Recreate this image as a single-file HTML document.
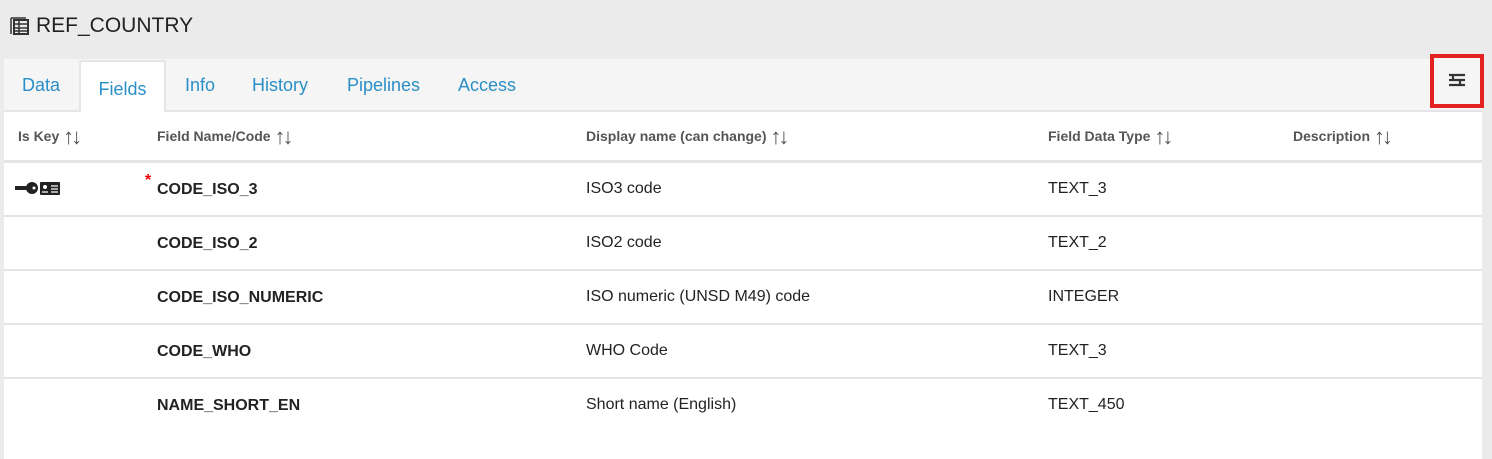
<!DOCTYPE html>
<html><head><meta charset="utf-8"><style>
*{margin:0;padding:0;box-sizing:border-box}
body{width:1492px;height:416px;background:#ebebeb;font-family:"Liberation Sans",sans-serif;overflow:hidden;position:relative}
.title{position:absolute;left:10px;top:14px;font-size:21px;color:#222;display:flex;align-items:center;gap:6px}
.panel{position:absolute;left:4px;top:59px;width:1478px;height:400px;background:#fff}
.tabs{height:53px;background:#f5f5f5;border-bottom:2px solid #e3e5e8;position:relative}
.tab{position:absolute;top:16px;font-size:18px;color:#2a8fc7}
.tab.active{top:1px;left:75px;width:87px;height:52px;background:#fff;border:2px solid #e3e5e8;border-bottom:none;border-radius:3px 3px 0 0;padding-top:17px;text-align:center}
.redbox{position:absolute;left:1430px;top:54px;width:54px;height:54px;border:4px solid #e52222;background:#f5f5f5}
.hdr{position:absolute;top:124px;font-size:14px;font-weight:bold;color:#555}
.hdr span{font-weight:normal;font-size:22px;letter-spacing:-3px;vertical-align:-3px}
.line{position:absolute;left:4px;width:1478px;background:#e3e5e8}
.cell{position:absolute;font-size:16px;color:#222}
.b{font-weight:bold}
</style></head><body>
<div class="title"><svg width="20" height="20" viewBox="0 0 20 20"><rect x="4" y="4" width="14" height="14" fill="none" stroke="#333" stroke-width="2"/><path d="M1 2v16M1 2h15M4 8h14M4 12h14M4 15h14M9 4v14" stroke="#333" stroke-width="1.5" fill="none"/></svg>REF_COUNTRY</div>
<div class="panel"><div class="tabs">
<span class="tab" style="left:18px">Data</span>
<div class="tab active">Fields</div>
<span class="tab" style="left:181px">Info</span>
<span class="tab" style="left:248px">History</span>
<span class="tab" style="left:343px">Pipelines</span>
<span class="tab" style="left:454px">Access</span>
</div></div>
<div class="redbox"><svg style="position:absolute;left:14px;top:15px" width="18" height="16" viewBox="0 0 18 16"><path d="M1 2h16M1 7h16M1 12h16M5 2v5M12 7v5" stroke="#333" stroke-width="2.2"/></svg></div>
<div class="hdr" style="left:18px">Is Key <span>↑↓</span></div>
<div class="hdr" style="left:157px">Field Name/Code <span>↑↓</span></div>
<div class="hdr" style="left:586px">Display name (can change) <span>↑↓</span></div>
<div class="hdr" style="left:1048px">Field Data Type <span>↑↓</span></div>
<div class="hdr" style="left:1293px">Description <span>↑↓</span></div>
<div class="line" style="top:160px;height:3px"></div>
<div class="line" style="top:215px;height:2px"></div>
<div class="line" style="top:269px;height:2px"></div>
<div class="line" style="top:323px;height:2px"></div>
<div class="line" style="top:377px;height:2px"></div>
<svg style="position:absolute;left:14px;top:180px" width="48" height="16" viewBox="0 0 48 16"><path d="M1 6h14v4H1z" fill="#222"/><circle cx="18" cy="8" r="6" fill="#222"/><circle cx="20" cy="8" r="1.5" fill="#fff"/><rect x="26" y="2" width="20" height="13" rx="1" fill="#222"/><circle cx="31" cy="7" r="2" fill="#fff"/><path d="M28 12h6M37 6h7M37 9h7M37 12h7" stroke="#fff" stroke-width="1.3"/></svg>
<span style="position:absolute;left:145px;top:172px;color:#e00;font-weight:bold;font-size:16px">*</span>
<div class="cell b" style="left:157px;top:181px">CODE_ISO_3</div>
<div class="cell" style="left:586px;top:180px">ISO3 code</div>
<div class="cell" style="left:1048px;top:180px">TEXT_3</div>
<div class="cell b" style="left:157px;top:235px">CODE_ISO_2</div>
<div class="cell" style="left:586px;top:234px">ISO2 code</div>
<div class="cell" style="left:1048px;top:234px">TEXT_2</div>
<div class="cell b" style="left:157px;top:289px">CODE_ISO_NUMERIC</div>
<div class="cell" style="left:586px;top:288px">ISO numeric (UNSD M49) code</div>
<div class="cell" style="left:1048px;top:288px">INTEGER</div>
<div class="cell b" style="left:157px;top:343px">CODE_WHO</div>
<div class="cell" style="left:586px;top:342px">WHO Code</div>
<div class="cell" style="left:1048px;top:342px">TEXT_3</div>
<div class="cell b" style="left:157px;top:397px">NAME_SHORT_EN</div>
<div class="cell" style="left:586px;top:396px">Short name (English)</div>
<div class="cell" style="left:1048px;top:396px">TEXT_450</div>
</body></html>
